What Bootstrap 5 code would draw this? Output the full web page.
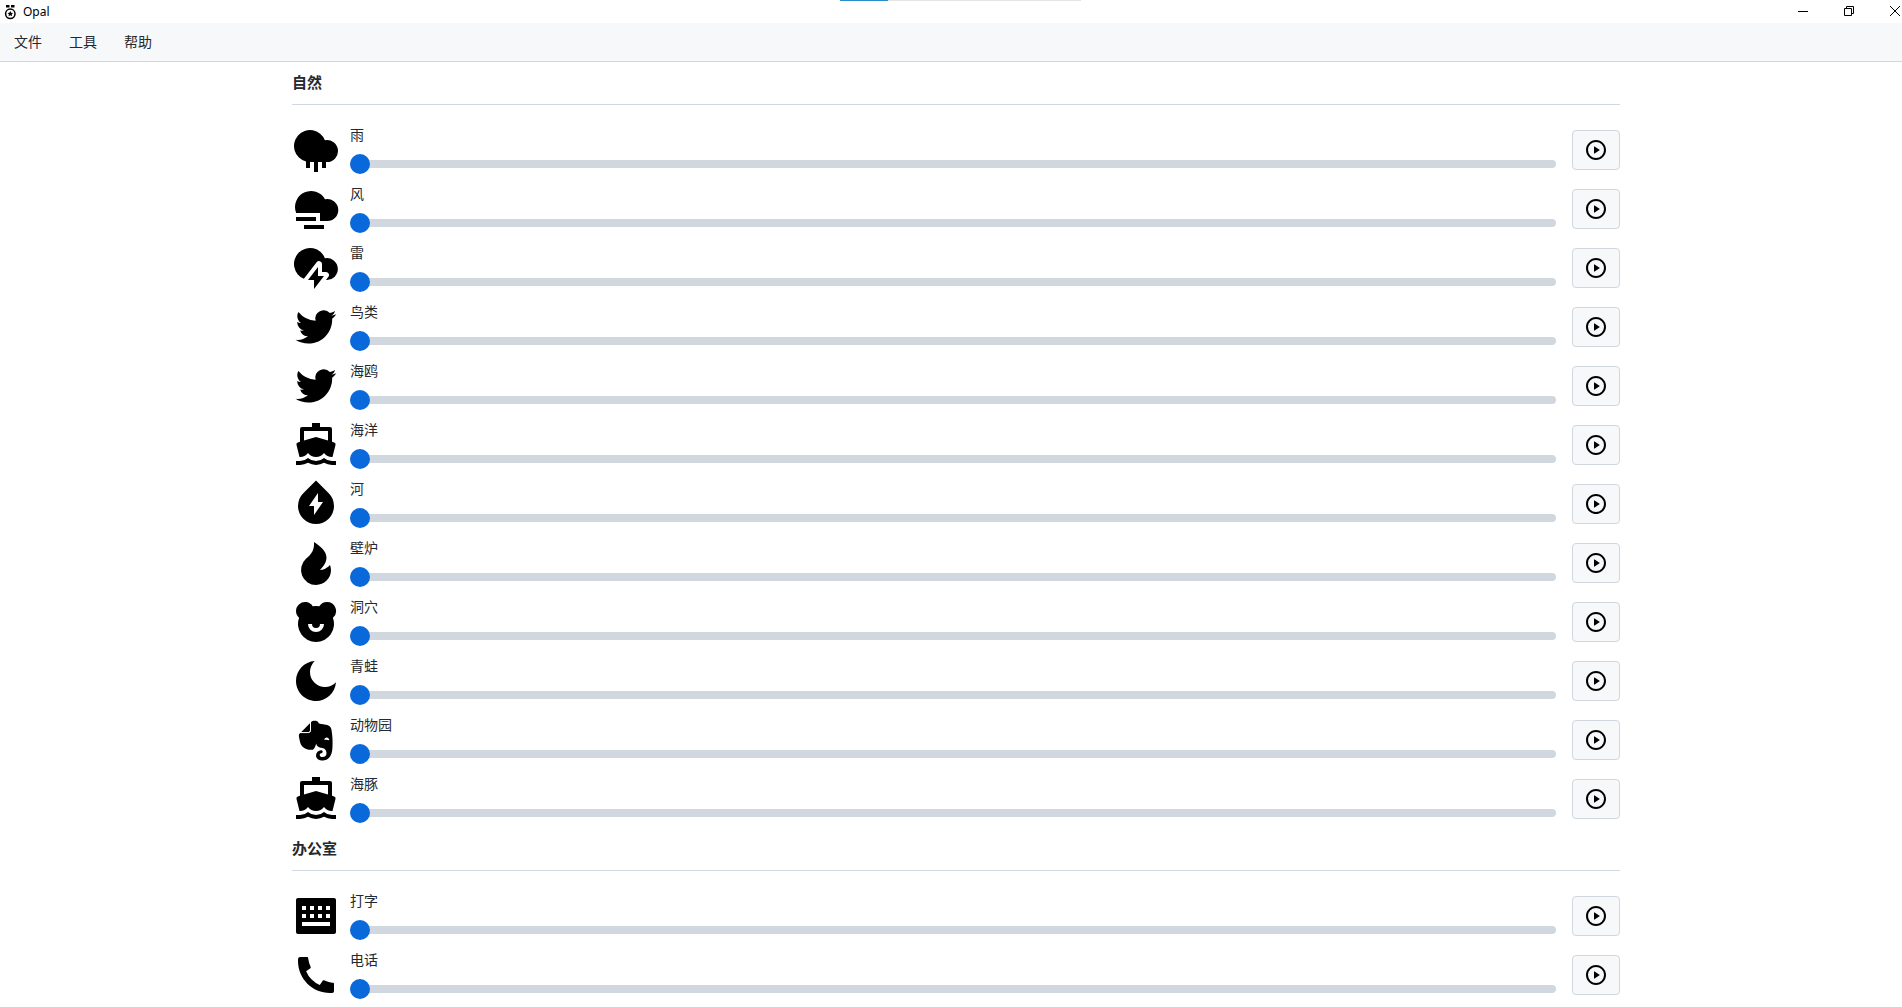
<!DOCTYPE html>
<html lang="zh-CN">
<head>
<meta charset="utf-8">
<meta name="viewport" content="width=device-width, initial-scale=1">
<title>Opal</title>
<link href="https://cdn.jsdelivr.net/npm/bootstrap@5.3.0/dist/css/bootstrap.min.css" rel="stylesheet">
<style>
  body { font-family: "Noto Sans", "Noto Sans CJK SC", sans-serif; font-size: 14px; line-height: 20px; color: #24292f; background: #fff; }
  .load-track { left: 840px; width: 241px; height: 1px; background: #e5e5e5; }
  .load-fill { width: 48px; height: 1px; background: #2a8dc9; }
  .titlebar { height: 23px; padding-left: 3px; gap: 6px; font-size: 12px; color: #000; }
  .win-btn { width: 46px; height: 21px; }
  .win-btns { margin-right: -16px; }
  .menubar { height: 39px; background: #f6f8fa; border-bottom: 1px solid #d0d7de; padding: 0 14px; gap: 27px; }
  .menubar .btn { color: #24292f; font-size: 14px; line-height: 20px; }
  .page-wrap { padding-left: 10px; }
  .mixer { max-width: 1328px; }
  .group-title { font-size: 15px; font-weight: 700; line-height: 21px; padding: 10px 0 11px; margin: 0 0 15px; border-bottom: 1px solid #d0d7de; }
  .sound { padding: 6px 0 5px; gap: 10px; }
  .sound-icon { width: 48px; height: 48px; flex: none; fill: #000; }
  .sound label { line-height: 18px; margin-bottom: 10px; }
  .volume { appearance: none; -webkit-appearance: none; display: block; width: 100%; height: 20px; margin: 0; background: transparent; }
  .volume::-webkit-slider-runnable-track { height: 8px; border-radius: 4px; background: #d0d7de; }
  .volume::-webkit-slider-thumb { -webkit-appearance: none; width: 20px; height: 20px; margin-top: -6px; border: 0; border-radius: 50%; background: #0969da; }
  .volume::-moz-range-track { height: 8px; border-radius: 4px; background: #d0d7de; }
  .volume::-moz-range-thumb { width: 20px; height: 20px; border: 0; border-radius: 50%; background: #0969da; }
  .play { width: 48px; height: 40px; margin-left: 6px; background: #f6f8fa; border: 1px solid #d0d7de; border-radius: 4px; flex: none; }
</style>
<script src="https://cdn.jsdelivr.net/npm/bootstrap@5.3.0/dist/js/bootstrap.bundle.min.js"></script>
</head>
<body class="overflow-x-hidden">
<svg class="d-none" aria-hidden="true">
  <symbol id="rain" viewBox="0 0 24 24"><path d="M13 18v5h-2v-5H9v3H7v-3.252a8 8 0 1 1 9.458-10.65A5.5 5.5 0 1 1 17.5 18l-.5.001v3h-2v-3h-2z"/></symbol>
  <symbol id="wind" viewBox="0 0 24 24"><path d="M2.084 14A8 8 0 0 1 16.500 7.130 5.500 5.500 0 1 1 17.300 18H14v-4H2.084zM2 16h10v2H2v-2zm4 4h10v2H6v-2z"/></symbol>
  <symbol id="thunder" viewBox="0 0 24 24"><path d="M16.988 18l1.216-1.58a1.5 1.5 0 0 0-1.189-2.415H15v-3.976a1.5 1.5 0 0 0-2.69-.914l-6.365 8.281A8 8 0 1 1 16.458 7.1a5.5 5.5 0 1 1 .53 10.898V18zM13 16.005h3l-5 6.5v-4.5H8l5-6.505v4.505z"/></symbol>
  <symbol id="bird" viewBox="0 0 24 24"><path d="M22.162 5.656a8.384 8.384 0 0 1-2.402.658A4.196 4.196 0 0 0 21.6 4c-.82.488-1.719.83-2.656 1.015a4.182 4.182 0 0 0-7.126 3.814 11.874 11.874 0 0 1-8.62-4.37 4.168 4.168 0 0 0-.566 2.103c0 1.45.738 2.731 1.86 3.481a4.168 4.168 0 0 1-1.894-.523v.052a4.185 4.185 0 0 0 3.355 4.101 4.21 4.21 0 0 1-1.89.072A4.185 4.185 0 0 0 7.97 16.65a8.394 8.394 0 0 1-6.191 1.732 11.83 11.83 0 0 0 6.41 1.88c7.693 0 11.9-6.373 11.9-11.9 0-.18-.005-.362-.013-.54a8.496 8.496 0 0 0 2.087-2.165z"/></symbol>
  <symbol id="ship" viewBox="0 0 24 24"><path d="M4 10.4V4a1 1 0 0 1 1-1h5V1h4v2h5a1 1 0 0 1 1 1v6.4l1.086.326a1 1 0 0 1 .682 1.2l-1.516 6.068A4.992 4.992 0 0 1 16 16a4.992 4.992 0 0 1-4 2 4.992 4.992 0 0 1-4-2 4.992 4.992 0 0 1-4.252 1.994l-1.516-6.068a1 1 0 0 1 .682-1.2L4 10.4zm2-.6L12 8l6 1.8V5H6v4.8zM4 20a5.978 5.978 0 0 0 4-1.528A5.978 5.978 0 0 0 12 20a5.978 5.978 0 0 0 4-1.528A5.978 5.978 0 0 0 20 20h2v2h-2a7.963 7.963 0 0 1-4-1.07A7.963 7.963 0 0 1 12 22a7.963 7.963 0 0 1-4-1.07A7.963 7.963 0 0 1 4 22H2v-2h2z"/></symbol>
  <symbol id="river" viewBox="0 0 24 24"><path d="M5.636 6.636L12 .272l6.364 6.364a9 9 0 1 1-12.728 0zM13 11V6.5L8.5 13H11v4.5l4.5-6.5H13z"/></symbol>
  <symbol id="fire" viewBox="0 0 24 24"><path d="M12 23a7.5 7.5 0 0 1-5.138-12.963C8.204 8.774 11.5 6.5 11 1.5c6 4 9 8 3 14 1 0 2.5 0 5-2.47.27.773.5 1.604.5 2.47A7.5 7.5 0 0 1 12 23z"/></symbol>
  <symbol id="bear" viewBox="0 0 24 24"><path fill-rule="evenodd" d="M17.5 2a4.5 4.5 0 0 1 2.951 7.897A9 9 0 1 1 3.55 9.897a4.5 4.5 0 1 1 6.792-5.744 9.05 9.05 0 0 1 3.319 0A4.494 4.494 0 0 1 17.5 2zM8 13a4 4 0 0 0 8 0h-2a2 2 0 0 1-4 0H8z"/></symbol>
  <symbol id="moon" viewBox="0 0 24 24"><path d="M11.38 2.019a7.5 7.5 0 1 0 10.6 10.6C21.662 17.854 17.316 22 12.001 22 6.477 22 2 17.523 2 12c0-5.315 4.146-9.661 9.38-9.981z"/></symbol>
  <symbol id="elephant" viewBox="0 0 24 24"><g transform="translate(.25 .15)"><path fill-rule="evenodd" d="M8.63 7.754c-.216.201-.546.217-.743.217h-2.11c-.61 0-.974 0-1.22.033-.134.017-.298.084-.381.117-.033.016-.033 0-.017-.016l4.816-4.94c.017-.017.033-.017.017.017a1.734 1.734 0 0 0-.117.382c-.033.248-.033.615-.033 1.23v2.212c0 .2-.017.532-.213.748zM12.913 21.644c-.56-.367-.858-.849-.972-1.15a2.566 2.566 0 0 1-.181-.948 2.579 2.579 0 0 1 2.571-2.58c.428 0 .775.347.775.781a.77.77 0 0 1-.396.665.97.97 0 0 1-.28.1c-.082.017-.396.05-.543.182a.778.778 0 0 0-.298.582c0 .25.099.484.264.651.297.3.692.465 1.12.465a2.036 2.036 0 0 0 2.028-2.045c0-1.015-.676-1.915-1.566-2.313-.132-.067-.346-.117-.543-.167a8.719 8.719 0 0 0-.495-.083c-.692-.084-2.423-.632-2.538-2.174 0 0-.51 2.33-1.532 2.962-.098.05-.23.1-.378.133-.148.034-.311.05-.364.05-1.665.1-3.43-.433-4.65-1.698 0 0-.825-.682-1.253-2.596-.1-.466-.298-1.298-.412-2.08-.05-.282-.067-.499-.083-.699 0-.815.494-1.365 1.121-1.448h3.365c.576 0 .907-.15 1.12-.35.28-.267.347-.649.347-1.098V3.38c.082-.615.627-1.131 1.433-1.131h.396c.165 0 .363.017.544.033.132.017.247.05.445.1.989.249 1.203 1.28 1.203 1.28s1.87.333 2.81.5c.89.165 3.09.315 3.51 2.546.99 5.36.396 10.553.346 10.553-.71 5.13-4.927 4.88-4.927 4.88a3.375 3.375 0 0 1-1.99-.497zM15.900 11.800c.1-.8.7-1.200 1.200-1.200.7 0 1.200.5 1.300 1.400-.8-.3-1.600-.4-2.500-.2z"/><path fill="none" stroke="#fff" stroke-width=".5" d="M3.600 8.150h4.300q1.100 0 1.100-1.200V2.800"/></g></symbol>
  <symbol id="keyboard" viewBox="0 0 24 24"><path fill-rule="evenodd" d="M3 3h18a1 1 0 0 1 1 1v16a1 1 0 0 1-1 1H3a1 1 0 0 1-1-1V4a1 1 0 0 1 1-1zm2 4v2h2V7H5zm0 4v2h2v-2H5zm0 4v2h14v-2H5zm4-4v2h2v-2H9zm0-4v2h2V7H9zm4 0v2h2V7h-2zm4 0v2h2V7h-2zm-4 4v2h2v-2h-2zm4 0v2h2v-2h-2z"/></symbol>
  <symbol id="phone" viewBox="0 0 24 24"><path d="M21 16.42v3.536a1 1 0 0 1-.93.998c-.437.03-.794.046-1.07.046-8.837 0-16-7.163-16-16 0-.276.015-.633.046-1.07A1 1 0 0 1 4.044 3H7.58a.5.5 0 0 1 .498.45c.023.23.044.413.064.552A13.901 13.901 0 0 0 9.35 8.003c.095.2.033.439-.147.567l-2.158 1.542a13.047 13.047 0 0 0 6.844 6.844l1.54-2.154a.462.462 0 0 1 .573-.149 13.901 13.901 0 0 0 4 1.205c.139.02.322.042.55.064a.5.5 0 0 1 .449.498z"/></symbol>
  <symbol id="play" viewBox="0 0 24 24"><path d="M12 22C6.477 22 2 17.523 2 12S6.477 2 12 2s10 4.477 10 10-4.477 10-10 10zm0-2a8 8 0 1 0 0-16 8 8 0 0 0 0 16zM10.622 8.415l4.879 3.252a.4.4 0 0 1 0 .666l-4.88 3.252a.4.4 0 0 1-.621-.332V8.747a.4.4 0 0 1 .622-.332z"/></symbol>
</svg>

<div class="load-track position-absolute top-0"><div class="load-fill"></div></div>
<header>
  <div class="titlebar d-flex align-items-center">
    <svg width="14" height="16" viewBox="0 0 14 16" aria-hidden="true"><path d="M3 1h3.500v2.500H3zM8 1h3.500v2.500H8z"/><circle cx="7.300" cy="9.800" r="4.700" fill="none" stroke="#000" stroke-width="1.500"/><path d="M7.300 7l.9 1.800 1.900.2-1.400 1.300.4 2-1.800-1-1.800 1 .4-2L4.500 9l1.900-.2z"/></svg>
    <span>Opal</span>
    <div class="win-btns d-flex ms-auto align-self-start">
      <button class="win-btn btn p-0 border-0 rounded-0 d-flex align-items-center justify-content-center" aria-label="最小化"><svg width="10" height="10" shape-rendering="crispEdges"><path d="M0 5h10v1H0z"/></svg></button>
      <button class="win-btn btn p-0 border-0 rounded-0 d-flex align-items-center justify-content-center" aria-label="还原"><svg width="10" height="10" fill="none" stroke="#000"><path d="M.5 2.500h7v7h-7zM2.500 2.500v-2h7v7h-2"/></svg></button>
      <button class="win-btn btn p-0 border-0 rounded-0 d-flex align-items-center justify-content-center" aria-label="关闭"><svg width="10" height="10" fill="none" stroke="#000"><path d="M0 0l10 10M10 0L0 10"/></svg></button>
    </div>
  </div>
  <nav class="menubar d-flex align-items-center" aria-label="菜单">
    <button class="btn border-0 p-0">文件</button>
    <button class="btn border-0 p-0">工具</button>
    <button class="btn border-0 p-0">帮助</button>
  </nav>
</header>
<main class="page-wrap">
  <div class="mixer mx-auto" id="mixer"></div>
</main>
<script>
  const groups = [
    ['自然', [['rain','雨'],['wind','风'],['thunder','雷'],['bird','鸟类'],['bird','海鸥'],['ship','海洋'],['river','河'],['fire','壁炉'],['bear','洞穴'],['moon','青蛙'],['elephant','动物园'],['ship','海豚']]],
    ['办公室', [['keyboard','打字'],['phone','电话']]]
  ];
  let n = 0;
  document.getElementById('mixer').innerHTML = groups.map(([title, sounds]) => `
    <section>
      <h2 class="group-title">${title}</h2>
      ${sounds.map(([icon, name]) => { n++; return `
      <div class="sound d-flex align-items-center">
        <svg class="sound-icon" aria-hidden="true"><use href="#${icon}"/></svg>
        <div class="flex-grow-1 d-flex flex-column">
          <label for="vol${n}">${name}</label>
          <input class="volume" type="range" id="vol${n}" min="0" max="100" value="0">
        </div>
        <button class="play btn p-0 d-flex align-items-center justify-content-center" aria-label="播放 ${name}"><svg width="24" height="24"><use href="#play"/></svg></button>
      </div>`; }).join('')}
    </section>`).join('');
</script>
</body>
</html>
